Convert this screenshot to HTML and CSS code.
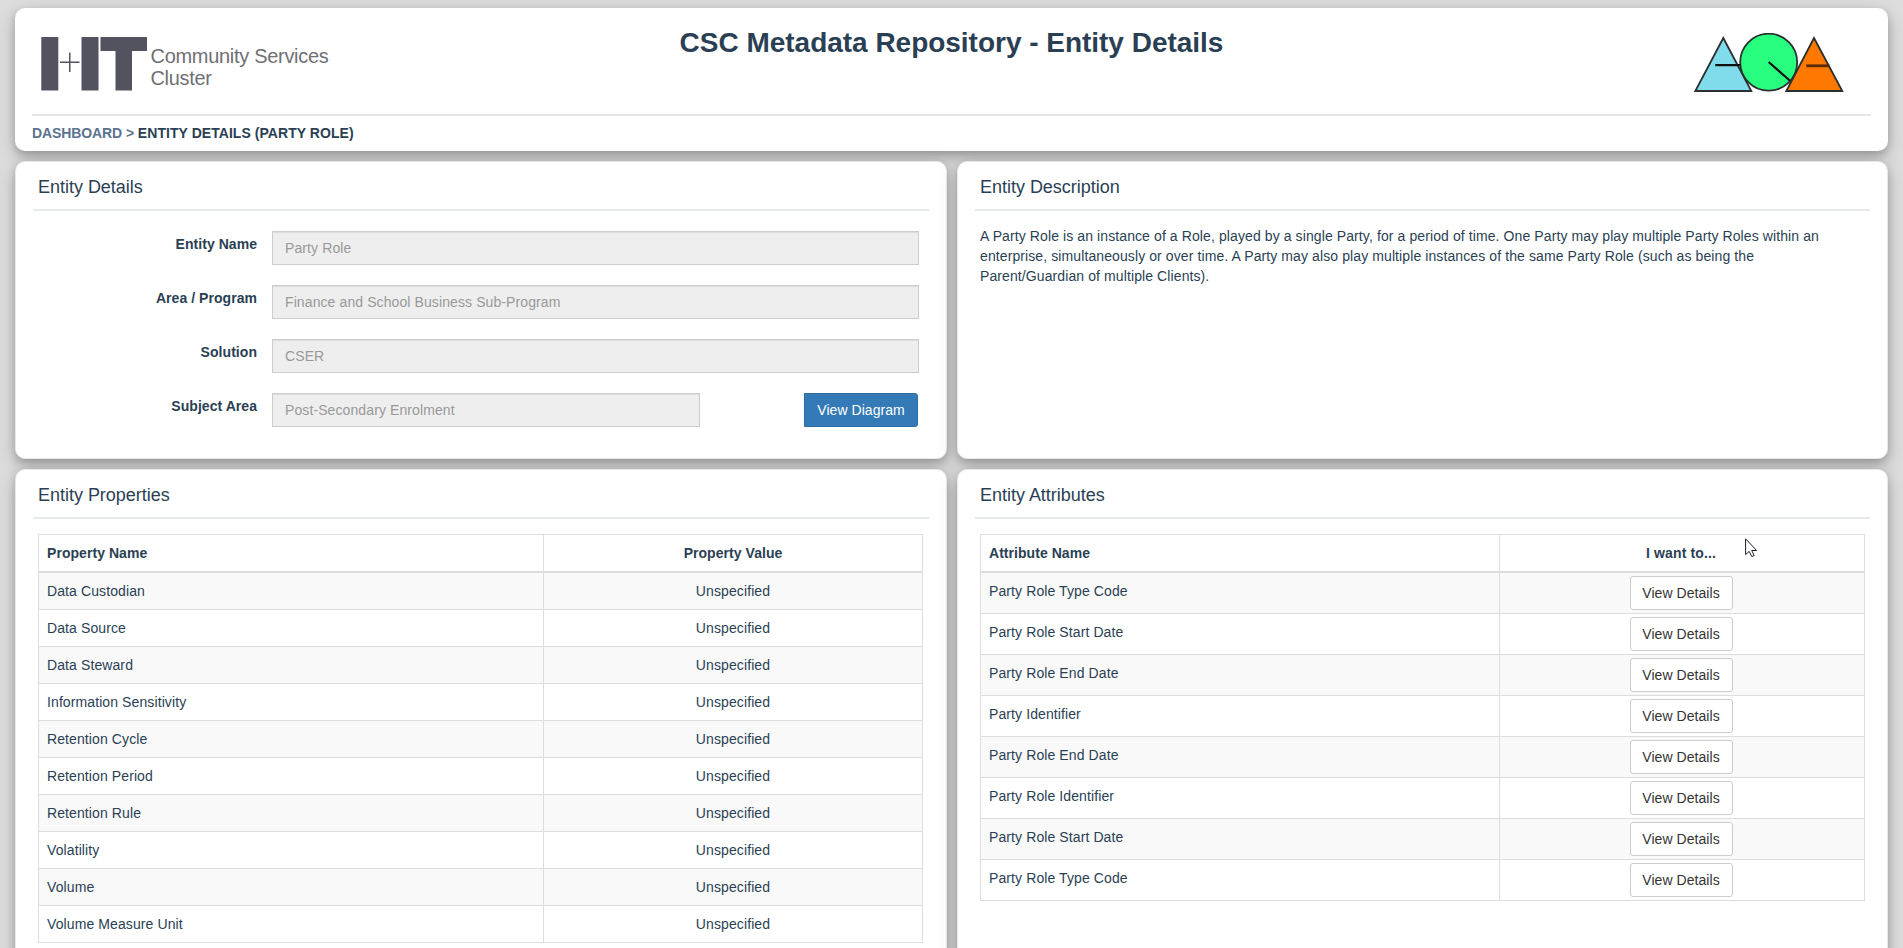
FILE: index.html
```html
<!DOCTYPE html>
<html lang="en">
<head>
<meta charset="utf-8">
<title>CSC Metadata Repository - Entity Details</title>
<link rel="stylesheet" href="styles.css">
</head>
<body>
<div class="page">
  <header class="card masthead">
    <div class="masthead-top">
      <svg class="logo-iit" width="340" height="72" viewBox="0 0 340 72">
        <g fill="#53525f">
          <path d="M9.300 12h17v53.500h-17zM49.500 12h17v53.500h-17zM68.500 12H115v14h-15v39.500H83.500V26h-15z"/>
          <path d="M28 36.500h19.500v1.500H28zM37 27.500h1.500v19.500h-1.500z"/>
        </g>
        <g class="logo-text">
          <text x="118.500" y="38" textLength="178" lengthAdjust="spacingAndGlyphs">Community Services</text>
          <text x="118.500" y="60" textLength="61" lengthAdjust="spacingAndGlyphs">Cluster</text>
        </g>
      </svg>
      <h1 class="title">CSC Metadata Repository - Entity Details</h1>
      <svg class="logo-aoa" width="152" height="62" viewBox="0 0 152 62" stroke="#2b2f2f" stroke-width="1.800">
        <circle cx="76.700" cy="29.200" r="28.500" fill="#28ff7f"/>
        <path d="M31.300 5 59.300 58H3.300z" fill="#80dbeb"/>
        <path d="M23.300 32.200h25M76.700 29 98 47.800" fill="none" stroke="#111" stroke-width="2.200"/>
        <path d="M122 5 150.300 58H94.300z" fill="#ff7800"/>
        <path d="M114.300 32.800h23" stroke-width="2.800" stroke="#5a2a00"/>
      </svg>
    </div>
    <nav class="crumbs"><a>DASHBOARD &gt;</a> <span>ENTITY DETAILS (PARTY ROLE)</span></nav>
  </header>

  <main class="panels">
    <section class="card panel">
      <h2>Entity Details</h2>
      <form class="form">
        <label>Entity Name</label><div class="field">Party Role</div>
        <label>Area / Program</label><div class="field">Finance and School Business Sub-Program</div>
        <label>Solution</label><div class="field">CSER</div>
        <label>Subject Area</label>
        <div class="split"><div class="field">Post-Secondary Enrolment</div><button type="button" class="btn primary">View Diagram</button></div>
      </form>
    </section>

    <section class="card panel">
      <h2>Entity Description</h2>
      <p class="desc">A Party Role is an instance of a Role, played by a single Party, for a period of time. One Party may play multiple Party Roles within an<br>enterprise, simultaneously or over time. A Party may also play multiple instances of the same Party Role (such as being the<br>Parent/Guardian of multiple Clients).</p>
    </section>

    <section class="card panel">
      <h2>Entity Properties</h2>
      <table class="grid props">
        <thead><tr><th>Property Name</th><th>Property Value</th></tr></thead>
        <tbody>
          <tr><td>Data Custodian</td><td>Unspecified</td></tr>
          <tr><td>Data Source</td><td>Unspecified</td></tr>
          <tr><td>Data Steward</td><td>Unspecified</td></tr>
          <tr><td>Information Sensitivity</td><td>Unspecified</td></tr>
          <tr><td>Retention Cycle</td><td>Unspecified</td></tr>
          <tr><td>Retention Period</td><td>Unspecified</td></tr>
          <tr><td>Retention Rule</td><td>Unspecified</td></tr>
          <tr><td>Volatility</td><td>Unspecified</td></tr>
          <tr><td>Volume</td><td>Unspecified</td></tr>
          <tr><td>Volume Measure Unit</td><td>Unspecified</td></tr>
        </tbody>
      </table>
    </section>

    <section class="card panel">
      <h2>Entity Attributes</h2>
      <table class="grid attrs">
        <thead><tr><th>Attribute Name</th><th>I want to...</th></tr></thead>
        <tbody>
          <tr><td>Party Role Type Code</td><td><button type="button" class="btn">View Details</button></td></tr>
          <tr><td>Party Role Start Date</td><td><button type="button" class="btn">View Details</button></td></tr>
          <tr><td>Party Role End Date</td><td><button type="button" class="btn">View Details</button></td></tr>
          <tr><td>Party Identifier</td><td><button type="button" class="btn">View Details</button></td></tr>
          <tr><td>Party Role End Date</td><td><button type="button" class="btn">View Details</button></td></tr>
          <tr><td>Party Role Identifier</td><td><button type="button" class="btn">View Details</button></td></tr>
          <tr><td>Party Role Start Date</td><td><button type="button" class="btn">View Details</button></td></tr>
          <tr><td>Party Role Type Code</td><td><button type="button" class="btn">View Details</button></td></tr>
        </tbody>
      </table>
    </section>
  </main>

  <svg class="cursor" width="13" height="20" viewBox="0 0 13 20"><path d="M.6.800v15.800l3.600-3.200 2.600 5.200 2.400-1.100-2.500-5h4.900z" fill="#fff" stroke="#1c1c2c"/></svg>
</div>
</body>
</html>
```

FILE: styles.css
```css
* { box-sizing: border-box; }

body {
  margin: 0;
  background: #ddd;
  color: #2a3f54;
  font: 14px/20px "Liberation Sans", Arial, sans-serif;
  letter-spacing: .1px;
}

.page {
  position: relative;
  height: 948px;
  padding: 8px 15px 0;
  overflow: hidden;
}

.card {
  background: #fff;
  border-radius: 10px;
  box-shadow: 0 4px 8px 0 rgba(0, 0, 0, .2), 0 6px 20px 0 rgba(0, 0, 0, .19);
}

.masthead { height: 143px; padding: 0 17px; }

.masthead-top {
  display: grid;
  grid-template-columns: 1fr auto 1fr;
  height: 108px;
  border-bottom: 2px solid #e5e5e5;
}

.logo-iit { margin-top: 17px; }
.logo-text { fill: #6f6f74; font-size: 21px; letter-spacing: -.3px; }
.logo-aoa { justify-self: end; margin: 25px 27px 0 0; }

.title {
  margin: 19px 0 0;
  font-size: 28px;
  line-height: 31px;
  font-weight: bold;
  letter-spacing: -.02px;
}

.crumbs {
  padding-top: 7px;
  font-weight: bold;
  letter-spacing: 0;
  white-space: nowrap;
}
.crumbs a { color: #5a738e; letter-spacing: -.1px; }
.crumbs span { letter-spacing: .05px; }

.panels {
  display: grid;
  grid-template-columns: 932px 931px;
  grid-template-rows: 298px 560px;
  gap: 10px;
  margin-top: 10px;
}

.panel { border: 1px solid #e6e9ed; padding: 0 17px; }

.panel h2 {
  height: 49px;
  margin: 0;
  padding: 15px 5px 0;
  border-bottom: 2px solid #e6e9ed;
  font-size: 18px;
  line-height: 20px;
  font-weight: normal;
  letter-spacing: -.02px;
}

.form {
  display: grid;
  grid-template-columns: 224px 647px;
  grid-auto-rows: 34px;
  gap: 20px 15px;
  padding-top: 20px;
}

.form label {
  padding-top: 3px;
  text-align: right;
  font-weight: bold;
  letter-spacing: .05px;
}

.field {
  height: 34px;
  padding: 6px 12px;
  border: 1px solid #ccc;
  background: #eee;
  color: #999;
  box-shadow: inset 0 1px 1px rgba(0, 0, 0, .075);
}

.split { display: flex; justify-content: space-between; padding-right: 1px; }
.split .field { width: 428px; }

.btn {
  display: block;
  width: 103px;
  height: 34px;
  margin: 0 auto;
  padding: 0;
  border: 1px solid #ccc;
  border-radius: 3px;
  background: #fff;
  color: #333;
  font: inherit;
  letter-spacing: .05px;
}

.btn.primary {
  width: 114px;
  margin: 0;
  border-color: #2e6da4;
  border-radius: 0 3px 3px 0;
  background: #337ab7;
  color: #fff;
}

.desc { margin: 0; padding: 15px 5px 0; white-space: nowrap; }

.grid {
  width: 885px;
  margin: 15px 0 0 5px;
  border-collapse: collapse;
  table-layout: fixed;
}

.grid th, .grid td {
  height: 37px;
  padding: 8px;
  border: 1px solid #ddd;
  text-align: left;
  vertical-align: top;
}

.grid th { padding-bottom: 7px; border-bottom-width: 2px; letter-spacing: .05px; }
.grid th:last-child, .grid td:last-child { text-align: center; }
.grid tbody tr:nth-child(odd) { background: #f9f9f9; }
.props th:first-child { width: 505px; }
.attrs th:first-child { width: 519px; }
.attrs th:last-child { padding-right: 10px; letter-spacing: .15px; }
.attrs td { height: 41px; }
.attrs td:last-child { padding: 3px 9px 3px 7px; }

.cursor { position: absolute; left: 1745px; top: 538px; }
```
